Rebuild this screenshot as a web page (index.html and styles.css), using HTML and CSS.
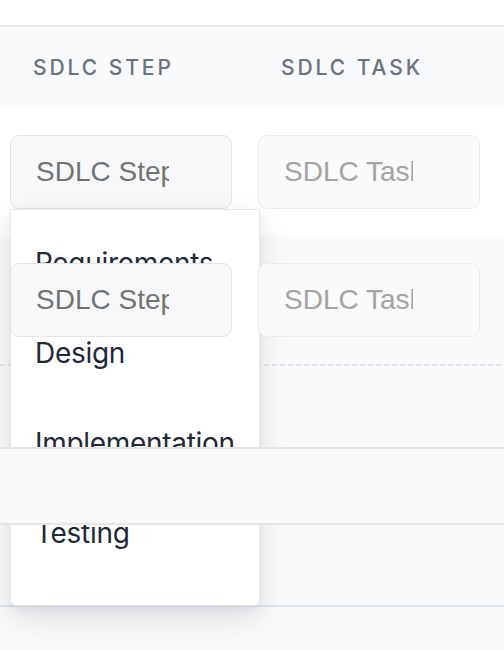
FILE: index.html
```
<!DOCTYPE html>
<html lang="en">
<head>
<meta charset="utf-8">
<title>SDLC</title>
<link rel="stylesheet" href="styles.css">
</head>
<body>
<div class="page">
  <div class="top"></div>
  <div class="head grid">
    <div class="th">SDLC Step</div>
    <div class="th">SDLC Task</div>
  </div>
  <div class="row row-white grid">
    <div class="cell cell-step">
      <input class="inp inp-step" type="text" placeholder="SDLC Step">
      <ul class="menu">
        <li class="opt">Requirements</li>
        <li class="opt">Design</li>
        <li class="opt">Implementation</li>
        <li class="opt">Testing</li>
      </ul>
    </div>
    <div class="cell">
      <input class="inp inp-task" type="text" placeholder="SDLC Task" disabled>
    </div>
  </div>
  <div class="row row-gray grid">
    <div class="cell"><input class="inp inp-step lift" type="text" placeholder="SDLC Step"></div>
    <div class="cell"><input class="inp inp-task lift" type="text" placeholder="SDLC Task" disabled></div>
  </div>
  <div class="spacer"></div>
  <div class="band"></div>
  <div class="area"></div>
  <div class="rest"></div>
</div>
</body>
</html>
```
FILE: styles.css
```
html, body {
  margin: 0;
  padding: 0;
  background: #f9fafb;
}
.page {
  width: 504px;
  overflow: hidden;
  font-family: Inter, "Liberation Sans", sans-serif;
}
.top {
  height: 25px;
  background: #ffffff;
  border-bottom: 2px solid #e5e7eb;
}
.grid {
  display: grid;
  grid-template-columns: 222px 222px;
  column-gap: 26px;
  padding-left: 10px;
}
.head {
  height: 80px;
  align-items: center;
  background: #f9fafb;
}
.th {
  padding-left: 23px;
  font-size: 21px;
  font-weight: 500;
  letter-spacing: 0.14em;
  text-transform: uppercase;
  color: #6b7280;
}
.row {
  height: 129px;
  align-items: center;
  box-sizing: border-box;
}
.row-white {
  background: #ffffff;
  padding-top: 1px;
}
.row-gray {
  background: #f9fafb;
  background-image: repeating-linear-gradient(90deg, #e2e6ec 0 5px, transparent 5px 8px);
  background-size: 100% 2px;
  background-position: 0 100%;
  background-repeat: no-repeat;
  height: 130px;
  padding-bottom: 2px;
  padding-top: 0;
}
.cell {
  position: relative;
}
.inp {
  display: block;
  box-sizing: border-box;
  width: 222px;
  height: 74px;
  margin: 0;
  padding: 0 62px 0 25px;
  border-radius: 9px;
  font-family: "Liberation Sans", Arial, sans-serif;
  font-size: 28px;
  outline: none;
}
.inp-step {
  background: #f7f8f9;
  border: 1px solid #e2e4e7;
}
.inp-step::placeholder {
  color: #737373;
}
.inp-task {
  background: #f9faf9;
  border: 1px solid #ececec;
  padding-right: 66px;
}
.inp-task::placeholder {
  color: #a3a3a3;
}
.lift {
  position: relative;
  z-index: 2;
}
.menu {
  position: absolute;
  z-index: 1;
  top: 100%;
  left: 0;
  width: 250px;
  height: 397px;
  box-sizing: border-box;
  margin: 0;
  padding: 8px 0 0 0;
  list-style: none;
  background: #ffffff;
  border: 1px solid #e5e7eb;
  border-top-color: #e3e6ea;
  border-radius: 0 0 6px 6px;
  box-shadow: 0 12px 28px rgba(15, 23, 42, 0.12), 0 4px 8px rgba(15, 23, 42, 0.04);
}
.opt {
  height: 90px;
  line-height: 90px;
  padding-left: 24px;
  font-size: 28px;
  letter-spacing: -0.3px;
  color: #1f2937;
  white-space: nowrap;
  overflow: hidden;
}
.spacer {
  height: 81px;
}
.band {
  position: relative;
  z-index: 2;
  height: 74px;
  background: #f8f9fa;
  border-top: 2px solid #e8e4e1;
  border-bottom: 2px solid #e8e4e1;
}
.area {
  height: 80px;
  border-bottom: 2px solid #e0e6ed;
}
.rest {
  height: 60px;
}
```
